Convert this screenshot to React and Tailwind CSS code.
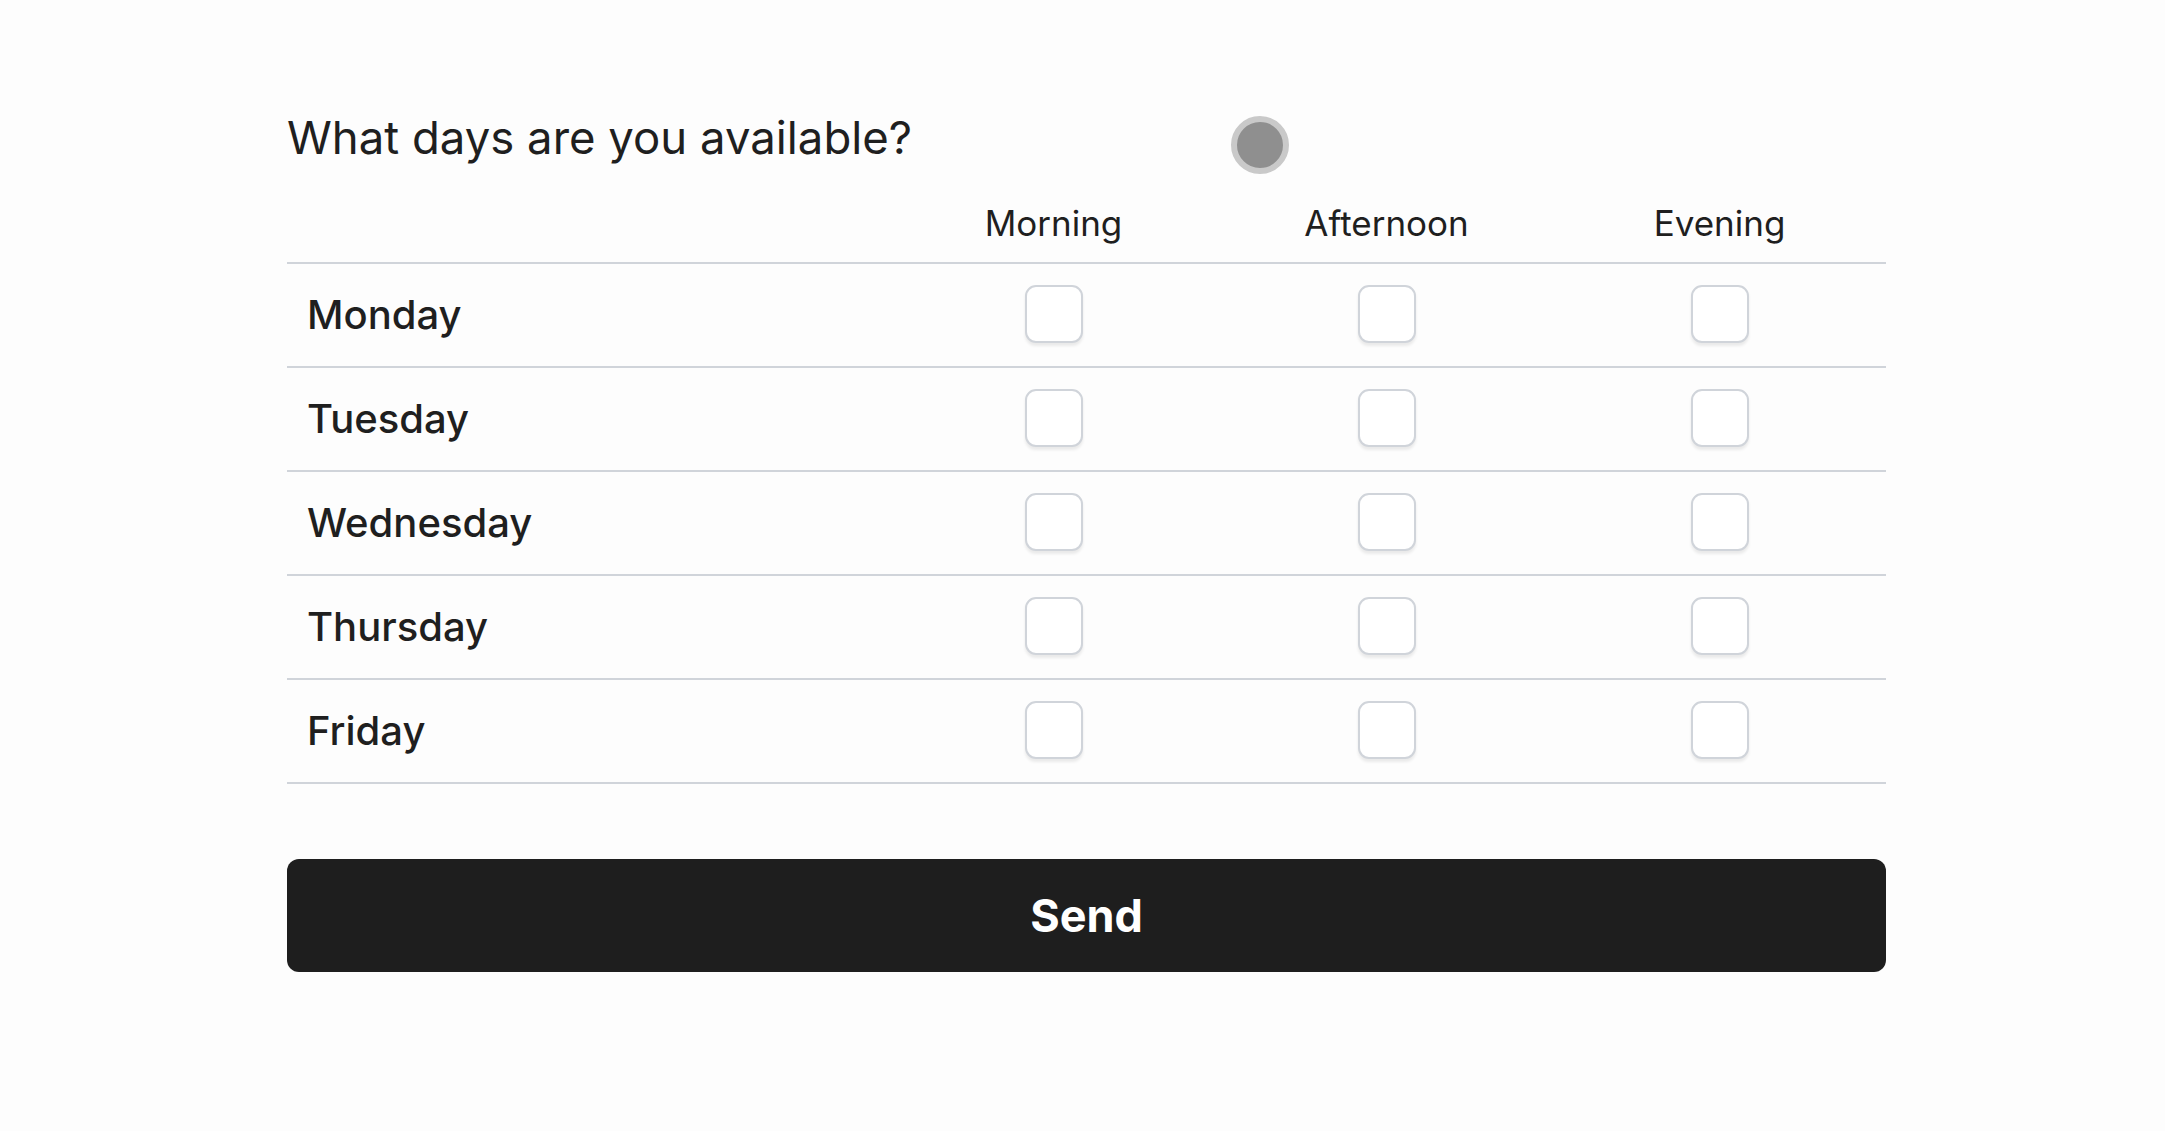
import React from "react";

const days = ["Monday", "Tuesday", "Wednesday", "Thursday", "Friday"];
const slots = ["Morning", "Afternoon", "Evening"];

function Box() {
  return (
    <div className="w-[58px] h-[58px] rounded-[11px] border-2 border-[#d0d4da] bg-white shadow-[0_3px_3px_rgba(0,0,0,0.08)]" />
  );
}

export default function App() {
  return (
    <div
      className="min-h-screen w-full bg-[#fdfdfd] text-[#1f1f1f]"
      style={{ fontFamily: "Inter, 'Noto Sans', sans-serif" }}
    >
      <div className="relative ml-[287px] w-[1599px] pt-[110px] pb-[158px]">
        <h1 className="text-[45.5px] leading-[56px] font-normal">
          What days are you available?
        </h1>
        <div className="absolute left-[944px] top-[116px] w-[58px] h-[58px] rounded-full bg-[#8f8f8f] border-[6px] border-[#c9c9c9]" />

        <div className="mt-[36px] grid grid-cols-[600px_1fr_1fr_1fr] border-b-2 border-[#d0d4da] pb-[18px]">
          <div />
          {slots.map((s) => (
            <div key={s} className="text-center text-[35px] leading-[42px]">
              {s}
            </div>
          ))}
        </div>

        {days.map((d) => (
          <div
            key={d}
            className="grid grid-cols-[600px_1fr_1fr_1fr] h-[104px] items-center border-b-2 border-[#d0d4da]"
          >
            <div className="pl-[20px] text-[40px] leading-[50px] font-medium">{d}</div>
            {slots.map((s) => (
              <div key={s} className="flex justify-center -translate-y-px">
                <Box />
              </div>
            ))}
          </div>
        ))}

        <button className="mt-[75px] w-full h-[113px] rounded-[12px] bg-[#1e1e1e] text-white text-[45px] font-bold">
          Send
        </button>
      </div>
    </div>
  );
}
